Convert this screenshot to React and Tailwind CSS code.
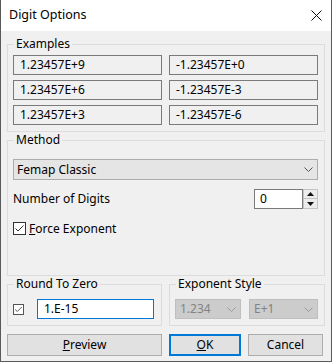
import React from "react";

const font = "font-['Noto_Sans',sans-serif]";

const Group = ({ title, className, children }) => (
  <fieldset className={`border border-[#dcdcdc] ${className}`}>
    <legend className="ml-[6px] px-[2px] text-[12px] leading-[16px]">{title}</legend>
    {children}
  </fieldset>
);

const Chevron = ({ color = "#555" }) => (
  <svg width="9" height="5" viewBox="0 0 9 5" className="shrink-0">
    <path d="M0.5 0.5 L4.5 4.5 L8.5 0.5" fill="none" stroke={color} strokeWidth="1" />
  </svg>
);

const ExampleBox = ({ value }) => (
  <div className="h-[20px] border border-[#7a7a7a] bg-[#f0f0f0] pl-[6px] flex items-center text-[12px]">
    {value}
  </div>
);

const Checkbox = ({ size = 13, border = "border-[#333]" }) => (
  <div
    className={`border ${border} bg-white flex items-center justify-center shrink-0`}
    style={{ width: size, height: size }}
  >
    <svg width={size - 2} height={size - 2} viewBox="0 0 11 11">
      <path d="M1.5 5.5 L4 8 L9.5 2.5" fill="none" stroke="#333" strokeWidth="1" />
    </svg>
  </div>
);

const examples = [
  ["1.23457E+9", "-1.23457E+0"],
  ["1.23457E+6", "-1.23457E-3"],
  ["1.23457E+3", "-1.23457E-6"],
];

export default function App() {
  return (
    <div className={`${font} w-[332px] h-[362px] bg-[#f0f0f0] border-x border-b border-[#595959] text-black flex flex-col`}>
      {/* title bar */}
      <div className="h-[31px] bg-white flex items-center justify-between pl-[8px] pr-[9px] shrink-0">
        <span className="text-[12.5px]">Digit Options</span>
        <svg width="11" height="11" viewBox="0 0 11 11">
          <path d="M0.5 0.5 L10.5 10.5 M10.5 0.5 L0.5 10.5" stroke="#111" strokeWidth="1" />
        </svg>
      </div>

      <div className="flex flex-col px-[6px]">
        <Group title="Examples" className="mt-[5px] w-[318px]">
          <div className="grid grid-cols-[149px_149px] gap-x-[7px] gap-y-[5px] pl-[5px] pt-[3px] pb-[6px]">
            {examples.map(([a, b]) => (
              <React.Fragment key={a}>
                <ExampleBox value={a} />
                <ExampleBox value={b} />
              </React.Fragment>
            ))}
          </div>
        </Group>

        <Group title="Method" className="w-[318px]">
          <div className="flex flex-col pl-[5px] pr-[6px] pt-[11px] pb-[39px]">
            <div className="h-[21px] bg-[#e5e5e5] border border-[#adadad] flex items-center justify-between pl-[3px] pr-[4px] text-[12px]">
              <span>Femap Classic</span>
              <Chevron />
            </div>
            <div className="mt-[9px] flex items-center justify-between text-[12px]">
              <span>Number of Digits</span>
              <div className="flex h-[20px]">
                <div className="w-[49px] border border-[#7a7a7a] bg-white pl-[5px] flex items-center">0</div>
                <div className="w-[15px] flex flex-col">
                  <div className="h-[10px] border border-[#c4c4c4] bg-[#ececec] flex items-center justify-center">
                    <svg width="7" height="4" viewBox="0 0 7 4">
                      <path d="M3.5 0 L7 4 L0 4 Z" fill="#111" />
                    </svg>
                  </div>
                  <div className="h-[10px] border border-t-0 border-[#c4c4c4] bg-[#ececec] flex items-center justify-center">
                    <svg width="7" height="4" viewBox="0 0 7 4">
                      <path d="M0 0 L7 0 L3.5 4 Z" fill="#111" />
                    </svg>
                  </div>
                </div>
              </div>
            </div>
            <div className="mt-[12px] h-[15px] flex items-center gap-[3px] text-[12px]">
              <Checkbox />
              <span>
                <span className="underline">F</span>orce Exponent
              </span>
            </div>
          </div>
        </Group>

        <div className="flex gap-[7px]">
          <Group title="Round To Zero" className="w-[155px] h-[50px]">
            <div className="flex items-center pl-[5px] pt-[7px]">
              <Checkbox size={11} border="border-[#555]" />
              <div className="ml-[13px] w-[117px] h-[20px] border border-[#0078d7] bg-white flex items-center pl-[6px] text-[12px]">
                1.E-15
              </div>
            </div>
          </Group>
          <Group title="Exponent Style" className="w-[156px] h-[50px]">
            <div className="flex gap-[8px] pl-[5px] pt-[7px] text-[12px] text-[#838383]">
              <div className="w-[66px] h-[20px] bg-[#cccccc] border border-[#bfbfbf] flex items-center justify-between pl-[4px] pr-[4px]">
                <span>1.234</span>
                <Chevron color="#9a9a9a" />
              </div>
              <div className="w-[69px] h-[20px] bg-[#cccccc] border border-[#bfbfbf] flex items-center justify-between pl-[4px] pr-[4px]">
                <span>E+1</span>
                <Chevron color="#9a9a9a" />
              </div>
            </div>
          </Group>
        </div>

        <div className="mt-[8px] flex gap-[7px] text-[12px]">
          <button className="w-[155px] h-[22px] bg-[#e1e1e1] border border-[#adadad] flex items-center justify-center">
            <span>
              <span className="underline">P</span>review
            </span>
          </button>
          <button className="w-[72px] h-[22px] bg-[#e1e1e1] border-2 border-[#0078d7] flex items-center justify-center">
            <span>
              <span className="underline">O</span>K
            </span>
          </button>
          <button className="w-[75px] h-[22px] bg-[#e1e1e1] border border-[#adadad] flex items-center justify-center">
            Cancel
          </button>
        </div>
      </div>
    </div>
  );
}
